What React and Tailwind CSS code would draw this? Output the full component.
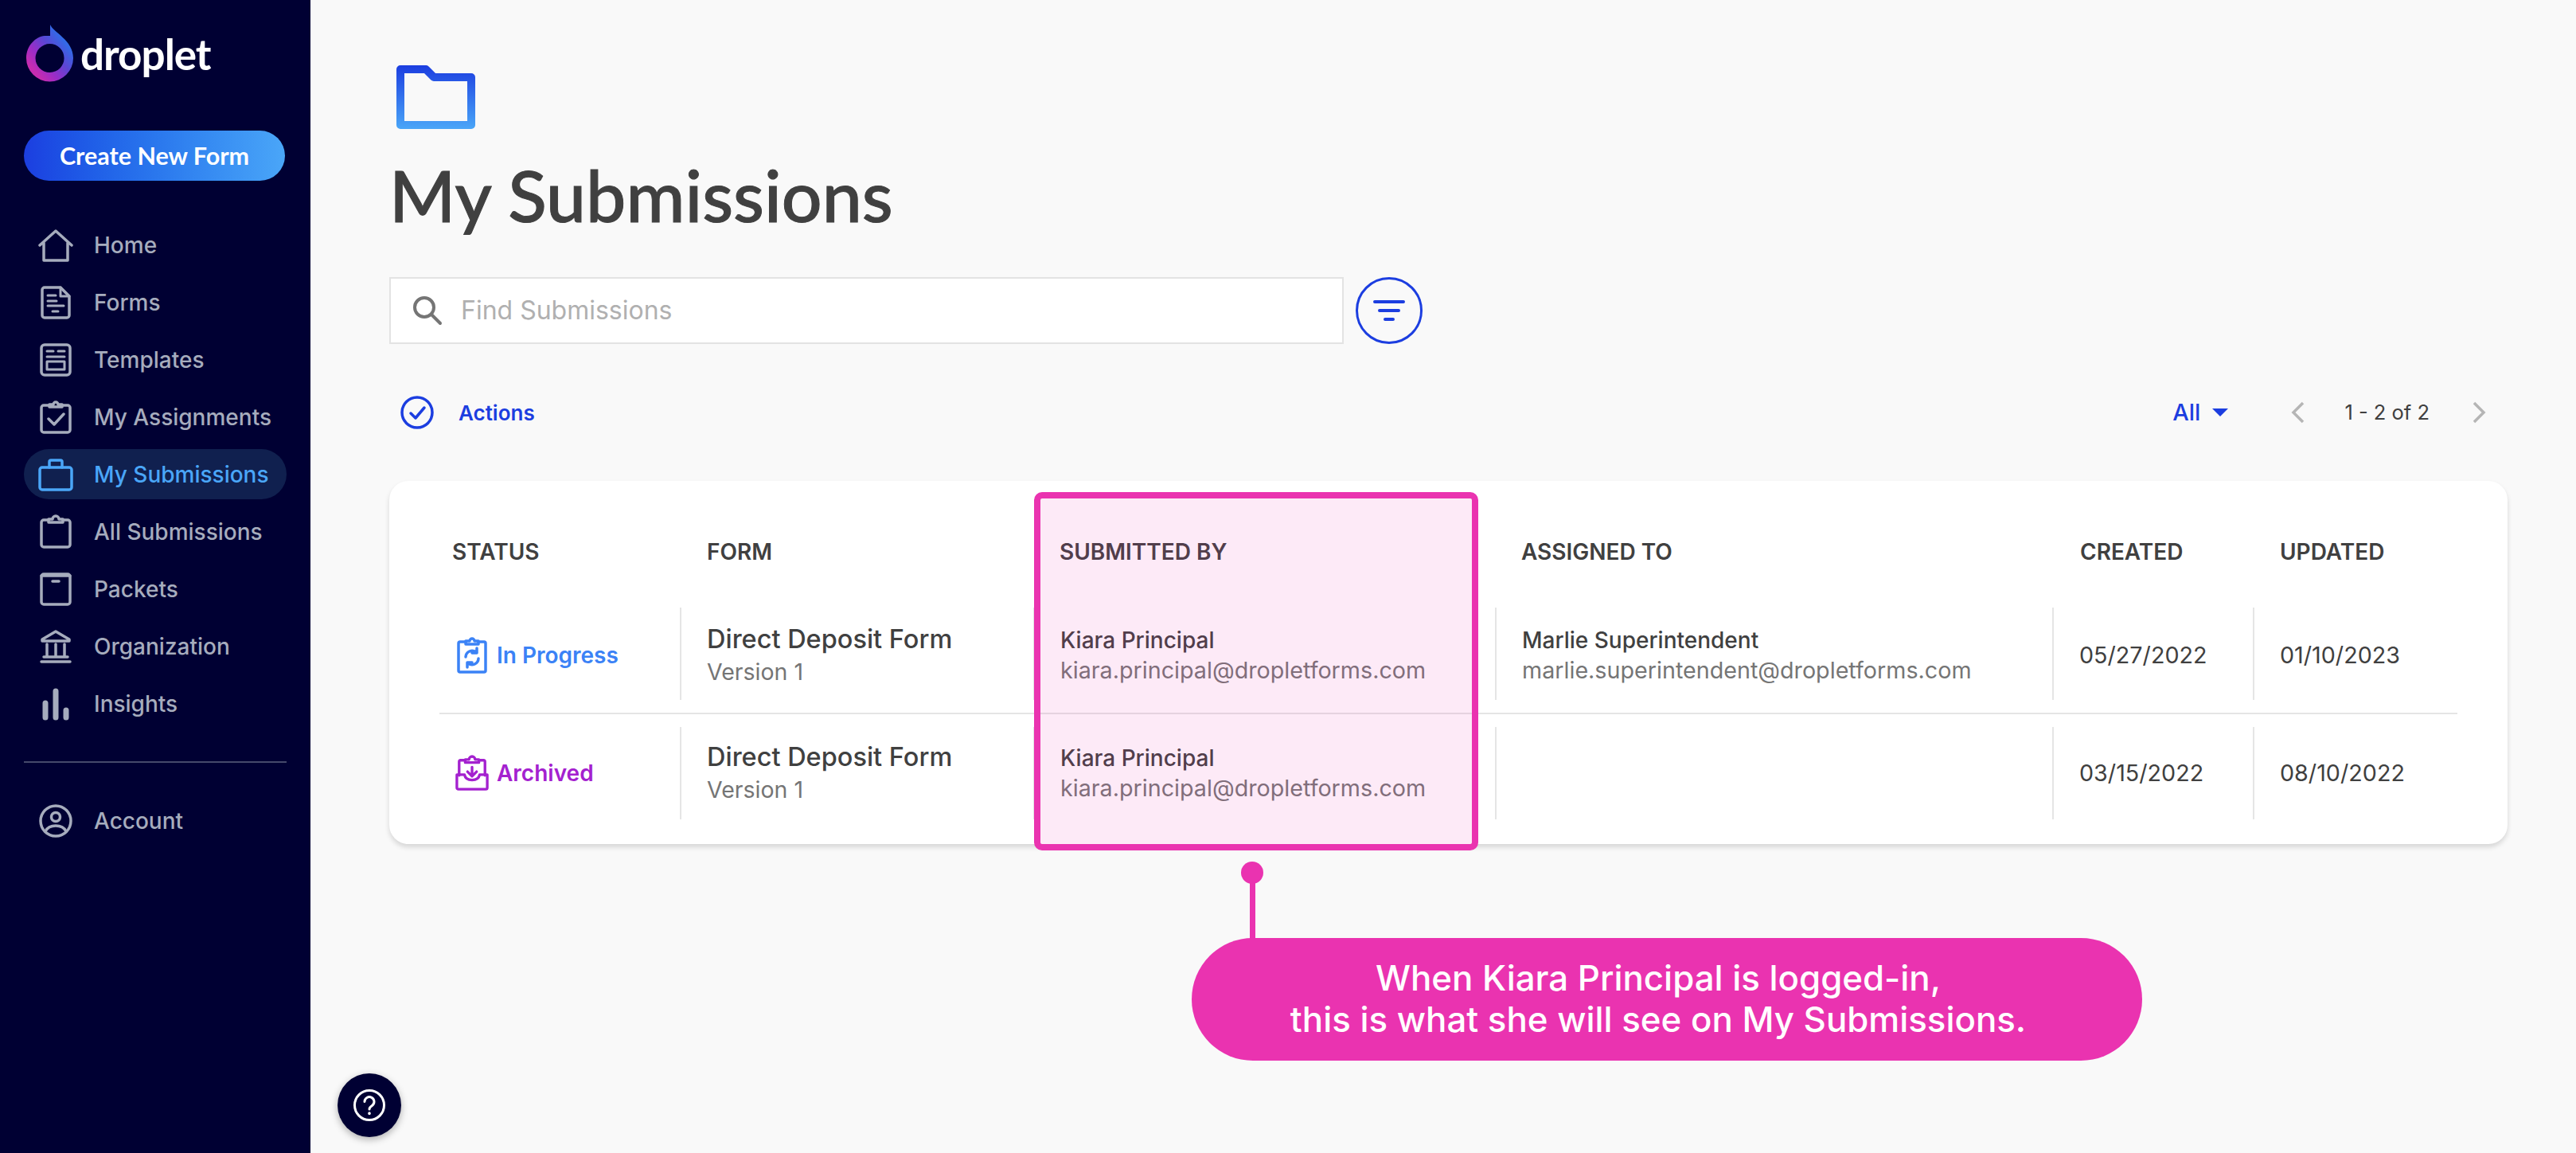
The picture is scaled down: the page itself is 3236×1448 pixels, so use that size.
const NAV = [
  { label: "Home", icon: "home" },
  { label: "Forms", icon: "forms" },
  { label: "Templates", icon: "templates" },
  { label: "My Assignments", icon: "assignments" },
  { label: "My Submissions", icon: "submissions", active: true },
  { label: "All Submissions", icon: "clipboard" },
  { label: "Packets", icon: "packets" },
  { label: "Organization", icon: "organization" },
  { label: "Insights", icon: "insights" },
];

const GRID = "grid grid-cols-[302px_444px_580px_700px_252px_256px]";

function NavIcon({ name }) {
  return (
    <svg width="44" height="44" viewBox="0 0 44 44" fill="none" stroke="currentColor" strokeWidth="3.5" strokeLinejoin="round" strokeLinecap="round">
      {name === "home" && <path d="M2 22 22 4l20 18M7 19v22h30V19" />}
      {name === "forms" && (
        <>
          <path d="M5 6a3 3 0 0 1 3-3h20l11 11v24a3 3 0 0 1-3 3H8a3 3 0 0 1-3-3z" />
          <path d="M28 3v11h11M12 13h10M12 20h11M12 26h20M18 33h7" strokeWidth="3" />
        </>
      )}
      {name === "templates" && (
        <>
          <rect x="4" y="3" width="36" height="38" rx="4" />
          <path d="M11 11h8M25 11h8M11 18h22" strokeWidth="3" />
          <rect x="11" y="24" width="22" height="10" strokeWidth="3" />
        </>
      )}
      {name === "assignments" && (
        <>
          <path d="M14 7H7a3 3 0 0 0-3 3v28a3 3 0 0 0 3 3h30a3 3 0 0 0 3-3V10a3 3 0 0 0-3-3h-7" />
          <path d="M14 9V6h5a3 3 0 0 1 6 0h5v3zM13 24l7 7 12-13" />
        </>
      )}
      {name === "submissions" && (
        <>
          <rect x="2" y="13" width="40" height="28" rx="3" />
          <path d="M14 13V6a2 2 0 0 1 2-2h12a2 2 0 0 1 2 2v7" />
        </>
      )}
      {name === "clipboard" && (
        <>
          <path d="M13 7H7a3 3 0 0 0-3 3v28a3 3 0 0 0 3 3h30a3 3 0 0 0 3-3V10a3 3 0 0 0-3-3h-6" />
          <path d="M13 10V6h5a4 4 0 0 1 8 0h5v4z" />
        </>
      )}
      {name === "packets" && (
        <>
          <rect x="4" y="3" width="36" height="38" rx="3" />
          <path d="M4 5h36M18 12h8" />
        </>
      )}
      {name === "organization" && (
        <>
          <path d="M22 3 5 13v2h34v-2zM4 41h36" />
          <path d="M11 19v15M22 19v15M33 19v15M7 35h30" />
        </>
      )}
      {name === "insights" && (
        <path d="M9 21v18M22 6v33M35 30v9" strokeWidth="7" />
      )}
      {name === "account" && (
        <>
          <circle cx="22" cy="22" r="19" />
          <circle cx="22" cy="17" r="5.5" />
          <path d="M9 35c3-6 8-7 13-7s10 1 13 7" />
        </>
      )}
    </svg>
  );
}

function Logo() {
  return (
    <svg width="62" height="74" viewBox="30 30 62 74" className="shrink-0">
      <defs>
        <linearGradient id="drop" gradientUnits="userSpaceOnUse" x1="84" y1="42" x2="36" y2="82">
          <stop offset="0" stopColor="#1f7bf0" />
          <stop offset="0.45" stopColor="#5b46d4" />
          <stop offset="0.75" stopColor="#9c2cc6" />
          <stop offset="1" stopColor="#c62cb0" />
        </linearGradient>
      </defs>
      <path
        fillRule="evenodd"
        fill="url(#drop)"
        d="M62 31C66 41 91 50 91 73A29.5 29.5 0 1 1 32 73C32 57 44 46 55 45L62 45ZM61.5 55A18 18 0 1 0 61.6 91A18 18 0 1 0 61.5 55Z"
      />
    </svg>
  );
}

function Sidebar() {
  return (
    <aside className="w-[390px] shrink-0 bg-[#000033] px-[30px] pt-[30px]">
      <div className="flex items-center gap-[8px] pl-[1px]">
        <Logo />
        <span className="mt-[2px] font-['Lato',sans-serif] text-[53px] leading-[60px] font-bold tracking-[-1px] text-white">droplet</span>
      </div>
      <button className="mt-[60px] h-[63px] w-[328px] rounded-full bg-gradient-to-r from-[#1c3ee0] to-[#4aa6f8] font-['Lato',sans-serif] text-[30.500px] font-bold text-white">
        Create New Form
      </button>
      <nav className="mt-[49px]">
        {NAV.map((item) => (
          <div
            key={item.label}
            className={
              "mb-[9px] flex h-[63px] items-center gap-[26px] rounded-full pl-[18px] text-[28px] font-medium " +
              (item.active ? "bg-[#10204f] text-[#4aa6f8]" : "text-[#a6acbd]")
            }
          >
            <NavIcon name={item.icon} />
            <span>{item.label}</span>
          </div>
        ))}
      </nav>
      <div className="mt-[41px] h-[2px] bg-[#45496b]" />
      <div className="mt-[41px] flex h-[63px] items-center gap-[26px] pl-[18px] text-[28px] font-medium text-[#a6acbd]">
        <NavIcon name="account" />
        <span>Account</span>
      </div>
    </aside>
  );
}

function Folder() {
  return (
    <svg width="100" height="80" viewBox="0 0 100 80" fill="none" className="ml-[9px]">
      <defs>
        <linearGradient id="folder" gradientUnits="userSpaceOnUse" x1="0" y1="0" x2="0" y2="80">
          <stop offset="0" stopColor="#1c3ee0" />
          <stop offset="1" stopColor="#4aa6f8" />
        </linearGradient>
      </defs>
      <path d="M5 5H37L47 15H94V75H5Z" stroke="url(#folder)" strokeWidth="10" strokeLinejoin="round" />
    </svg>
  );
}

function StatusIcon({ archived }) {
  if (archived) {
    return (
      <svg width="44" height="46" viewBox="0 0 44 46" fill="none" stroke="#a421cf" strokeWidth="3.5" strokeLinejoin="round" strokeLinecap="round">
        <path d="M5 26V8a2 2 0 0 1 2-2h6M31 6h6a2 2 0 0 1 2 2v18" />
        <path d="M13 9V5h5a4 4 0 0 1 8 0h5v4z" />
        <path d="M22 15v11M16 21l6 6 6-6" />
        <path d="M2 25h10c1 5 5 7 10 7s9-2 10-7h10v17a2 2 0 0 1-2 2H4a2 2 0 0 1-2-2z" />
      </svg>
    );
  }
  return (
    <svg width="40" height="46" viewBox="0 0 40 46" fill="none" stroke="#3b82f6" strokeWidth="3.5" strokeLinejoin="round" strokeLinecap="round">
      <path d="M12 6H5a2 2 0 0 0-2 2v34a2 2 0 0 0 2 2h30a2 2 0 0 0 2-2V8a2 2 0 0 0-2-2h-7" />
      <path d="M12 9V5h5a3 3 0 0 1 6 0h5v4z" />
      <path d="M12 25a8 8 0 0 1 13-6M28 27a8 8 0 0 1-13 6M26 14v6h-6M14 38v-6h6" />
    </svg>
  );
}

function Cell({ children, first, nudge }) {
  return (
    <div
      className={
        "flex h-[116px] flex-col justify-center " +
        (nudge ? "pt-[3px] " : "") +
        (first ? "pl-[20px]" : "border-l-2 border-[#e5e5e5] pl-[32px]")
      }
    >
      {children}
    </div>
  );
}

function Person({ name, email }) {
  return (
    <>
      <div className="text-[28px] leading-[38px] font-medium text-[#404040]">{name}</div>
      <div className="text-[28.700px] leading-[38px] text-[#757575]">{email}</div>
    </>
  );
}

function Row({ status, archived, assignee, created, updated, nudge }) {
  return (
    <div className={GRID + " py-[16px]"}>
      <Cell first nudge={nudge}>
        <div className="flex items-center gap-[10px]">
          <div className="flex w-[42px] justify-center">
            <StatusIcon archived={archived} />
          </div>
          <span className={"text-[28px] font-semibold " + (archived ? "text-[#a421cf]" : "text-[#3b82f6]")}>{status}</span>
        </div>
      </Cell>
      <Cell nudge={nudge}>
        <div className="text-[32.500px] leading-[42px] font-medium text-[#404040]">Direct Deposit Form</div>
        <div className="text-[28.500px] leading-[40px] text-[#757575]">Version 1</div>
      </Cell>
      <Cell nudge={nudge}>
        <Person name="Kiara Principal" email="kiara.principal@dropletforms.com" />
      </Cell>
      <Cell nudge={nudge}>{assignee && <Person name={assignee.name} email={assignee.email} />}</Cell>
      <Cell nudge={nudge}>
        <span className="text-[28.700px] text-[#404040]">{created}</span>
      </Cell>
      <Cell nudge={nudge}>
        <span className="text-[28.700px] text-[#404040]">{updated}</span>
      </Cell>
    </div>
  );
}

function Table() {
  return (
    <div className="mt-[56px] rounded-[24px] bg-white px-[63px] pb-[15px] shadow-[0_4px_6px_rgba(0,0,0,0.14)]">
      <div className={GRID + " h-[143px] items-center pt-[34px] text-[28px] font-semibold text-[#404040]"}>
        <div className="pl-[16px]">STATUS</div>
        <div className="pl-[34px]">FORM</div>
        <div className="pl-[33px]">SUBMITTED BY</div>
        <div className="pl-[33px]">ASSIGNED TO</div>
        <div className="pl-[35px]">CREATED</div>
        <div className="pl-[34px]">UPDATED</div>
      </div>
      <Row
        nudge
        status="In Progress"
        assignee={{ name: "Marlie Superintendent", email: "marlie.superintendent@dropletforms.com" }}
        created="05/27/2022"
        updated="01/10/2023"
      />
      <div className="h-[2px] bg-[#e5e5e5]" />
      <Row status="Archived" archived created="03/15/2022" updated="08/10/2022" />
    </div>
  );
}

export default function App() {
  return (
    <div className="relative flex h-[1448px] w-[3236px] overflow-hidden bg-[#f9f9f9] font-['Inter',sans-serif]">
      <Sidebar />
      <main className="flex-1 pt-[82px] pr-[86px] pl-[99px]">
        <Folder />
        <h1 className="mt-[28px] font-['Lato',sans-serif] text-[89.500px] leading-[110px] font-medium text-[#404040] [-webkit-text-stroke:1px_#404040]">My Submissions</h1>
        <div className="mt-[48px] flex items-center gap-[15px]">
          <div className="flex h-[84px] w-[1199px] items-center border-2 border-[#e3e3e3] bg-white pl-[26px]">
            <svg width="40" height="40" viewBox="0 0 40 40" fill="none" stroke="#757575" strokeWidth="4" strokeLinecap="round">
              <circle cx="16" cy="16" r="12" />
              <path d="m25 25 11 11" />
            </svg>
            <span className="ml-[22px] text-[32px] text-[#b0b0b0]">Find Submissions</span>
          </div>
          <div className="flex h-[84px] w-[84px] items-center justify-center rounded-full border-[3.500px] border-[#1c3ee0]">
            <svg width="42" height="30" viewBox="0 0 42 30" fill="none" stroke="#1c3ee0" strokeWidth="4" strokeLinecap="round">
              <path d="M3 4h36M9 15h24M16 26h10" />
            </svg>
          </div>
        </div>
        <div className="mt-[56px] flex h-[60px] items-center">
          <svg width="44" height="44" viewBox="0 0 44 44" fill="none" stroke="#1c3ee0" strokeWidth="3.5" strokeLinecap="round" strokeLinejoin="round" className="ml-[13px]">
            <circle cx="22" cy="22" r="19" />
            <path d="m14 23 6 6 11-13" />
          </svg>
          <span className="ml-[30px] text-[26px] font-semibold text-[#1c3ee0]">Actions</span>
          <div className="ml-auto flex items-center text-[#1c3ee0]">
            <span className="text-[29px] font-medium">All</span>
            <div className="ml-[15px] h-0 w-0 border-x-[10px] border-t-[10px] border-x-transparent border-t-[#1c3ee0]" />
          </div>
          <svg width="20" height="30" viewBox="0 0 20 30" fill="none" stroke="#b5b5b5" strokeWidth="3.5" className="ml-[78px]">
            <path d="M16 3 4 15l12 12" />
          </svg>
          <span className="ml-[48px] text-[25.500px] text-[#404040]">1 - 2 of 2</span>
          <svg width="20" height="30" viewBox="0 0 20 30" fill="none" stroke="#b5b5b5" strokeWidth="3.5" className="mr-[26px] ml-[52px]">
            <path d="m4 3 12 12L4 27" />
          </svg>
        </div>
        <Table />
      </main>

      {/* highlight box and callout sit over the table */}
      <div className="absolute top-[618px] left-[1299px] h-[450px] w-[558px] rounded-[10px] border-[8px] border-[#ea33b0] bg-[#ea33b0]/10" />
      <div className="absolute top-[1082px] left-[1559px] h-[28px] w-[28px] rounded-full bg-[#ea33b0]" />
      <div className="absolute top-[1100px] left-[1570px] h-[80px] w-[7px] bg-[#ea33b0]" />
      <div className="absolute top-[1178px] left-[1497px] flex h-[154px] w-[1194px] flex-col items-center justify-center rounded-full bg-[#ea33b0] pr-[22px] text-center text-[43.800px] leading-[52px] font-medium text-white">
        <div>When Kiara Principal is logged-in,</div>
        <div>this is what she will see on My Submissions.</div>
      </div>

      <div className="absolute top-[1348px] left-[424px] flex h-[80px] w-[80px] items-center justify-center rounded-full bg-[#000033] shadow-[0_3px_10px_rgba(0,0,0,0.3)]">
        <svg width="42" height="42" viewBox="0 0 42 42" fill="none" stroke="white" strokeWidth="3" strokeLinecap="round">
          <circle cx="21" cy="21" r="18.5" />
          <path d="M15 16.5a6 6 0 1 1 9.5 5c-2 1.400-3.500 2.400-3.500 4.500" />
          <path d="M21 31v.5" strokeWidth="3.5" />
        </svg>
      </div>
    </div>
  );
}
